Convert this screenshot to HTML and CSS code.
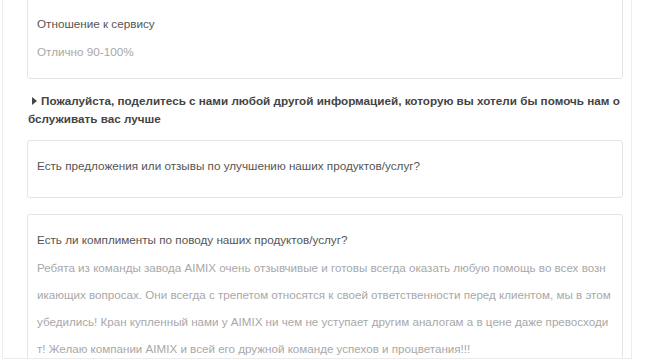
FILE: index.html
```html
<!DOCTYPE html>
<html lang="ru">
<head>
<meta charset="utf-8">
<title>Отзыв</title>
<link rel="stylesheet" href="styles.css">
</head>
<body>
<div class="frame">
  <div class="card card-first">
    <div class="q-title">Отношение к сервису</div>
    <div class="q-answer">Отлично 90-100%</div>
  </div>
  <div class="section-head"><span class="tri"></span>Пожалуйста, поделитесь с нами любой другой информацией, которую вы хотели бы помочь нам обслуживать вас лучше</div>
  <div class="card card-second">
    <div class="q-title">Есть предложения или отзывы по улучшению наших продуктов/услуг?</div>
    <div class="q-answer q-empty"></div>
  </div>
  <div class="card card-third">
    <div class="q-title">Есть ли комплименты по поводу наших продуктов/услуг?</div>
    <div class="q-answer">Ребята из команды завода AIMIX очень отзывчивые и готовы всегда оказать любую помощь во всех возникающих вопросах. Они всегда с трепетом относятся к своей ответственности перед клиентом, мы в этом убедились! Кран купленный нами у AIMIX ни чем не уступает другим аналогам а в цене даже превосходит! Желаю компании AIMIX и всей его дружной команде успехов и процветания!!!</div>
  </div>
</div>
</body>
</html>
```
FILE: styles.css
```css
html, body {
  margin: 0;
  padding: 0;
  background: #ffffff;
}
body {
  font-family: "Liberation Sans", Arial, sans-serif;
  font-size: 11.7px;
  color: #555555;
}
.frame {
  box-sizing: border-box;
  margin-left: 2px;
  width: 630px;
  height: 359px;
  border: 1px solid #ececec;
  border-top: none;
  padding: 0 8px 0 24px;
  overflow: hidden;
}
.card {
  border: 1px solid #e4e4e4;
  border-radius: 3px;
  padding: 15px 10px 13px 9px;
  background: #fff;
}
.card-first {
  margin-top: -2px;
}
.card-second {
  margin-top: 12px;
}
.card-third {
  margin-top: 16px;
}
.q-title {
  line-height: 20px;
  color: #555555;
  margin-bottom: 4px;
}
.q-answer {
  line-height: 27px;
  color: #a8a8a8;
  word-break: break-all;
}
.card-third .q-answer {
  font-size: 11.62px;
}
.q-empty {
  min-height: 4px;
}
.section-head {
  margin-top: 13px;
  padding-left: 1px;
  font-weight: bold;
  line-height: 18px;
  color: #444444;
  word-break: break-all;
}
.tri {
  display: inline-block;
  width: 0;
  height: 0;
  border-top: 4px solid transparent;
  border-bottom: 4px solid transparent;
  border-left: 5px solid #444444;
  margin: 0 4px 0 4px;
  vertical-align: 0;
}
```
